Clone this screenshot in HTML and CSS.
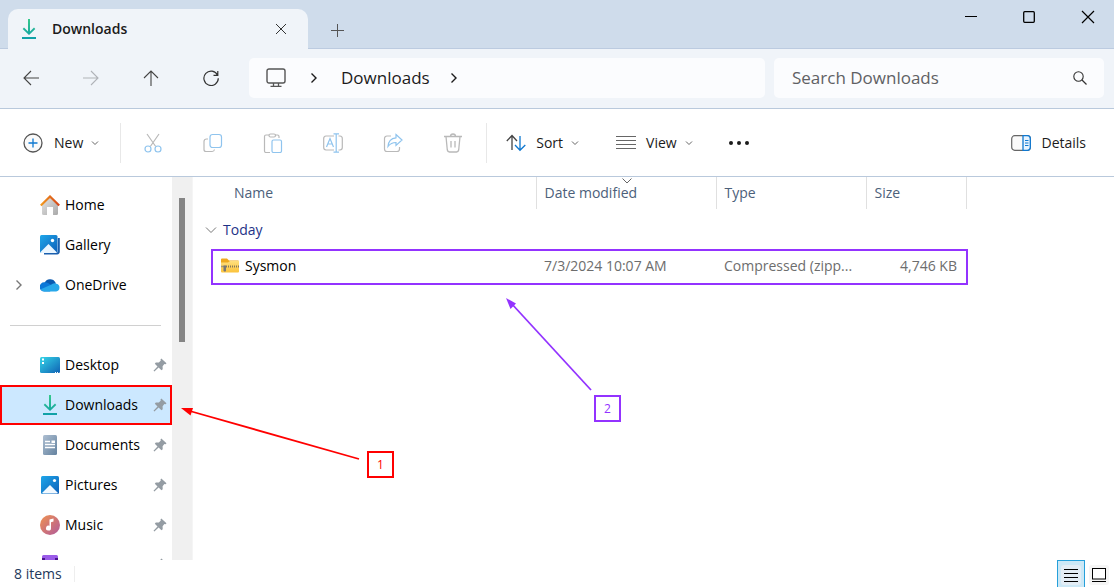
FILE: index.html
```
<!DOCTYPE html>
<html lang="en">
<head>
<meta charset="utf-8">
<title>Downloads</title>
<link rel="stylesheet" href="styles.css">
</head>
<body>
<svg class="defs" width="0" height="0" aria-hidden="true">
  <defs>
    <linearGradient id="g-down" x1="0" y1="0" x2="0" y2="1"><stop offset="0" stop-color="#35c98b"/><stop offset="1" stop-color="#0f9fa8"/></linearGradient>
    <linearGradient id="g-blue" x1="0" y1="0" x2="1" y2="1"><stop offset="0" stop-color="#1ea7ea"/><stop offset="1" stop-color="#0e5fb8"/></linearGradient>
    <linearGradient id="g-desk" x1="0" y1="0" x2="1" y2="1"><stop offset="0" stop-color="#35d6e8"/><stop offset="1" stop-color="#0f62b4"/></linearGradient>
    <linearGradient id="g-doc" x1="0" y1="0" x2="1" y2="1"><stop offset="0" stop-color="#aebfd2"/><stop offset="1" stop-color="#64829f"/></linearGradient>
    <linearGradient id="g-music" x1="0" y1="0" x2="1" y2="1"><stop offset="0" stop-color="#f0924f"/><stop offset="1" stop-color="#b05a9c"/></linearGradient>
    <linearGradient id="g-house" x1="0" y1="0" x2="1" y2="1"><stop offset="0" stop-color="#e6e6e6"/><stop offset="1" stop-color="#a9a9a9"/></linearGradient>
    <linearGradient id="g-roof" x1="0" y1="0" x2="1" y2="0"><stop offset="0" stop-color="#f39a1e"/><stop offset="1" stop-color="#d4451a"/></linearGradient>
    <linearGradient id="g-folder" x1="0" y1="0" x2="0" y2="1"><stop offset="0" stop-color="#ffdf7e"/><stop offset="1" stop-color="#fbc33c"/></linearGradient>
    <symbol id="i-down" viewBox="0 0 20 20"><path d="M9 0h2v12.600l4-4 1.300 1.400L10 16 3.700 10 5 8.600l4 4zM3 18h14v2H3z" fill="url(#g-down)"/></symbol>
    <symbol id="i-pin" viewBox="0 0 14 14"><path d="M8.300.5 13.500 5.200 12.600 6.200 11.400 6 9.600 8.200 9.700 11.200 8.500 12.200 5.600 9.500 1.400 13.500.5 12.800 4.500 8.400 1.800 5.700 2.800 4.500 5.900 4.500 7.800 2.500 7.500 1.400Z" fill="#949ca3"/></symbol>
    <symbol id="i-chev" viewBox="0 0 8 8"><path d="M1 2.500 4 5.500 7 2.500" fill="none" stroke="#666"/></symbol>
    <symbol id="i-next" viewBox="0 0 8 12"><path d="M1.500 1.500 6 6 1.500 10.500" fill="none" stroke="currentColor" stroke-width="1.400"/></symbol>
  </defs>
</svg>

<header class="titlebar">
  <div class="tab">
    <svg class="i20" aria-hidden="true"><use href="#i-down"/></svg>
    <span class="tab-title">Downloads</span>
    <button class="tab-close" aria-label="Close tab"><svg width="12" height="12"><path d="M1 1 11 11M11 1 1 11" stroke="#333" fill="none"/></svg></button>
  </div>
  <button class="tab-new" aria-label="New tab"><svg width="13" height="13"><path d="M6.500 0V13M0 6.500H13" stroke="#555" fill="none"/></svg></button>
  <div class="window-buttons">
    <button aria-label="Minimize"><svg width="12" height="12"><path d="M0 5.500H12" stroke="#000"/></svg></button>
    <button aria-label="Maximize"><svg width="12" height="12"><rect x=".7" y=".7" width="10.600" height="10.600" rx="1" fill="none" stroke="#000" stroke-width="1.300"/></svg></button>
    <button aria-label="Close"><svg width="14" height="14"><path d="M1 1 13 13M13 1 1 13" stroke="#000" stroke-width="1.200"/></svg></button>
  </div>
</header>

<nav class="navbar" aria-label="Navigation">
  <div class="nav-buttons">
    <button aria-label="Back"><svg width="16" height="16"><path d="M16 8H1M8 1 1 8 8 15" fill="none" stroke="#444" stroke-width="1.100"/></svg></button>
    <button aria-label="Forward" disabled><svg width="16" height="16"><path d="M0 8H15M8 1 15 8 8 15" fill="none" stroke="#b0b3b8" stroke-width="1.100"/></svg></button>
    <button aria-label="Up"><svg width="16" height="16"><path d="M8 16V1M1 8 8 1 15 8" fill="none" stroke="#444" stroke-width="1.100"/></svg></button>
    <button aria-label="Refresh"><svg width="16" height="16"><path d="M14.600 5.200A7.200 7.200 0 1 0 15.300 8.200M14.800 1V5.300H10.500" fill="none" stroke="#333" stroke-width="1.200"/></svg></button>
  </div>
  <div class="address">
    <svg class="pc" width="20" height="20" aria-hidden="true"><rect x="1" y="1" width="18" height="14" rx="2" fill="none" stroke="#555" stroke-width="1.400"/><path d="M7.500 15V18M12.500 15V18M4.500 18.400H15.500" stroke="#555" stroke-width="1.300"/></svg>
    <svg class="next" width="8" height="12" aria-hidden="true"><use href="#i-next"/></svg>
    <a class="crumb" href="#">Downloads</a>
    <svg class="next" width="8" height="12" aria-hidden="true"><use href="#i-next"/></svg>
  </div>
  <div class="search">
    <input type="search" placeholder="Search Downloads" aria-label="Search Downloads">
    <svg width="14" height="14" aria-hidden="true"><circle cx="5.500" cy="5.500" r="4.700" fill="none" stroke="#333" stroke-width="1.100"/><path d="M9 9 13.500 13.500" stroke="#333" stroke-width="1.200"/></svg>
  </div>
</nav>

<div class="toolbar" role="toolbar" aria-label="Commands">
  <button class="cmd cmd-new"><svg class="i20"><circle cx="10" cy="10" r="9" fill="#fafafa" stroke="#555" stroke-width="1.300"/><path d="M10 5.500V14.500M5.500 10H14.500" stroke="#0f78d0" stroke-width="1.300"/></svg>New<svg width="8" height="8"><use href="#i-chev"/></svg></button>
  <div class="icon-group">
    <button aria-label="Cut" disabled><svg class="i20" fill="none" stroke-width="1.200"><path d="M4 1 12.700 13.500M16 1 7.300 13.500" stroke="#b9b9b9"/><g stroke="#8fc4ee"><circle cx="5" cy="16" r="3"/><circle cx="15" cy="16" r="3"/></g></svg></button>
    <button aria-label="Copy" disabled><svg class="i20" fill="none" stroke-width="1.200"><path d="M5 6H3.500A2.500 2.500 0 0 0 1 8.500V16.500A2 2 0 0 0 3 18.500H9A2.500 2.500 0 0 0 11.500 16.500" stroke="#b9b9b9"/><rect x="7" y="1.500" width="11.500" height="13" rx="2.500" stroke="#8fc4ee"/></svg></button>
    <button aria-label="Paste" disabled><svg class="i20" fill="none" stroke-width="1.200"><path d="M6 2H3A1.500 1.500 0 0 0 1.500 3.500V18A1.500 1.500 0 0 0 3 19.500H7M12 2H14.500A1.500 1.500 0 0 1 16 3.500V5" stroke="#b9b9b9"/><rect x="6" y="1" width="6.500" height="3" rx="1.500" stroke="#b9b9b9"/><rect x="9" y="7" width="9.500" height="12.500" rx="1.500" stroke="#8fc4ee"/></svg></button>
    <button aria-label="Rename" disabled><svg class="i20" fill="none" stroke-width="1.200"><path d="M11 3H3A2.500 2.500 0 0 0 .7 5.500V14.500A2.500 2.500 0 0 0 3 17H11M15.500 3H17A2.500 2.500 0 0 1 19.300 5.500V14.500A2.500 2.500 0 0 1 17 17H15.500" stroke="#b9b9b9"/><path d="M3.500 14 7 5.500 10.500 14M4.800 11H9.200M13.200 1V19M10.500.8H16M10.500 19.200H16" stroke="#8fc4ee"/></svg></button>
    <button aria-label="Share" disabled><svg class="i20" fill="none" stroke-width="1.200"><path d="M8 3H4A2.500 2.500 0 0 0 1.500 5.500V16A2.500 2.500 0 0 0 4 18.500H14A2.500 2.500 0 0 0 16.500 16V14" stroke="#b9b9b9"/><path d="M13 1.500 19 7 13 12.500V9.500Q8 9.500 5 13.500 5.500 5.500 13 4.800Z" stroke="#8fc4ee"/></svg></button>
    <button aria-label="Delete" disabled><svg class="i20" fill="none" stroke="#b9b9b9" stroke-width="1.300"><path d="M1 3.500H19M7.500 3.500A2.500 2.500 0 0 1 12.500 3.500M3 3.500 4.300 17A2.500 2.500 0 0 0 6.500 19H13.500A2.500 2.500 0 0 0 15.700 17L17 3.500M8 8V14.500M12 8V14.500"/></svg></button>
  </div>
  <button class="cmd cmd-sort"><svg class="i20" fill="none" stroke-width="1.300"><path d="M6 17V2.500M.8 8 6 2.500 11 8" stroke="#444"/><path d="M14 3V17M9 12 14 17.300 19.300 12" stroke="#0f78d0"/></svg>Sort<svg width="8" height="8"><use href="#i-chev"/></svg></button>
  <button class="cmd cmd-view"><svg class="i20"><path d="M0 3.500H20M0 7.500H20M0 11.500H20M0 15.500H20" stroke="#666" stroke-width="1.100"/></svg>View<svg width="8" height="8"><use href="#i-chev"/></svg></button>
  <button class="more" aria-label="See more"><svg width="20" height="6" fill="#1b1b1b"><circle cx="2" cy="3" r="2"/><circle cx="10" cy="3" r="2"/><circle cx="18" cy="3" r="2"/></svg></button>
  <button class="cmd cmd-details"><svg class="i20"><rect x=".7" y="2.700" width="18.600" height="14.600" rx="3" fill="#fafafa" stroke="#666" stroke-width="1.200"/><path d="M12 2.700H16.300A3 3 0 0 1 19.300 5.700V14.300A3 3 0 0 1 16.300 17.300H12Z" fill="#e8f4ff" stroke="#0f78d0" stroke-width="1.300"/><path d="M14 7.500H17.500M14 10H17.500M14 12.500H17.500" stroke="#0f78d0"/></svg>Details</button>
</div>

<main class="main">
  <aside class="sidebar">
    <ul class="places">
      <li><a href="#"><svg class="i20"><path d="M2 9 10 2 18 9V18.500A1.500 1.500 0 0 1 16.500 20H13V12H7V20H3.500A1.500 1.500 0 0 1 2 18.500Z" fill="url(#g-house)"/><path d="M.8 10.500 10 1.500 19.200 10.500" fill="none" stroke="url(#g-roof)" stroke-width="2.200"/></svg>Home</a></li>
      <li><a href="#"><svg class="i20"><path d="M4 18.500H17A2 2 0 0 0 18.800 16.500V3" fill="none" stroke="#1a5fae" stroke-width="2"/><rect width="17.500" height="18" rx="1.500" fill="url(#g-blue)"/><path d="M0 17.500 8.500 9 17 17.500A2 2 0 0 1 16 18H1.500Z" fill="#eaf6ff"/><circle cx="12.500" cy="5.500" r="1.700" fill="#fff"/></svg>Gallery</a></li>
      <li><svg class="expander" width="8" height="12" aria-hidden="true"><use href="#i-next"/></svg><a href="#"><svg class="i20"><path d="M4.500 8A6 6 0 0 1 15.500 7.500L16 12H6Z" fill="#0a5ab0"/><path d="M4.200 16.500A4.400 4.400 0 0 1 4.200 7.300Q6.500 7 8.500 8.300L14 12 10 16.500Z" fill="#0b78d8"/><path d="M.8 14.300 11 9.800Q13.500 7.300 16.500 8.700A4 4 0 0 1 16.200 16.500H4.200Q1.800 16.300.8 14.300Z" fill="#28a8ea"/></svg>OneDrive</a></li>
      <li class="rule" role="separator"></li>
      <li><a href="#"><svg class="i20"><rect y="2" width="20" height="16" rx="1.500" fill="url(#g-desk)"/><path d="M2 4.500H4M2 8H4" stroke="#fff" stroke-width="2"/><path d="M15 17.500H19" stroke="#fff" stroke-dasharray="1 1"/></svg>Desktop</a><svg class="pin"><use href="#i-pin"/></svg></li>
      <li class="selected"><a href="#" aria-current="page"><svg class="i20"><use href="#i-down"/></svg>Downloads</a><svg class="pin"><use href="#i-pin"/></svg></li>
      <li><a href="#"><svg class="i20"><rect x="3" width="14" height="20" rx="1.500" fill="url(#g-doc)"/><path d="M5 6.500H10M5 9.500H15M5 12.500H15" stroke="#fff" stroke-width="1.300"/><path d="M11.500 5.500H15V8H11.500Z" fill="#fff"/></svg>Documents</a><svg class="pin"><use href="#i-pin"/></svg></li>
      <li><a href="#"><svg class="i20"><rect x="1" y="1" width="18" height="18" rx="1.500" fill="url(#g-blue)"/><path d="M2 18 10 10 18 18A2 2 0 0 1 17 18.500H3Z" fill="#f2f9ff"/><circle cx="14.500" cy="5.500" r="1.600" fill="#fff"/></svg>Pictures</a><svg class="pin"><use href="#i-pin"/></svg></li>
      <li><a href="#"><svg class="i20"><circle cx="10" cy="10" r="10" fill="url(#g-music)"/><path d="M9.500 4.500 13.500 3.500V6.500L11 7.200V13A2.500 2.500 0 1 1 9.500 10.800Z" fill="#fff"/></svg>Music</a><svg class="pin"><use href="#i-pin"/></svg></li>
      <li><a href="#" aria-label="Videos"><svg class="i20"><rect x="2" width="16" height="20" rx="1.500" fill="#9a5be8"/><path d="M2 3H5V5H2ZM15 3H18V5H15Z" fill="#4a168c"/></svg></a><svg class="pin"><use href="#i-pin"/></svg></li>
    </ul>
    <div class="scrollbar"><div class="thumb"></div></div>
  </aside>

  <section class="files">
    <table>
      <colgroup><col class="c-name"><col class="c-date"><col class="c-type"><col class="c-size"></colgroup>
      <thead>
        <tr><th>Name</th><th class="sorted">Date modified<svg class="sort-mark" width="10" height="6" aria-hidden="true"><path d="M.5.500 5 5 9.500.5" fill="none" stroke="#666"/></svg></th><th>Type</th><th>Size</th></tr>
      </thead>
      <tbody>
        <tr class="group"><td colspan="4"><button><svg width="12" height="8"><path d="M1 1.500 6 6.500 11 1.500" fill="none" stroke="#777"/></svg>Today</button></td></tr>
        <tr class="file">
          <td><span class="file-name"><svg class="zip" width="18" height="16" viewBox="0 0 18 16"><path d="M0 1.500A1 1 0 0 1 1 .5H6L8 2.500H17A1 1 0 0 1 18 3.500V8H0Z" fill="#efa91e"/><path d="M0 4.500H7L9 3H18V13.500A1 1 0 0 1 17 14.500H1A1 1 0 0 1 0 13.500Z" fill="url(#g-folder)"/><path d="M5 8.500H18" stroke="#85795b" stroke-width="2" stroke-dasharray="1 1"/><path d="M0 8.500H5" stroke="#a89a72" stroke-width="1.500"/><path d="M2.500 7.500H5V12.500L4 14 2.500 12.500Z" fill="#777"/></svg>Sysmon</span></td>
          <td>7/3/2024 10:07 AM</td><td>Compressed (zipp...</td><td class="num">4,746 KB</td>
        </tr>
      </tbody>
    </table>
  </section>

  <div class="notes">
    <svg class="arrows" width="640" height="320" aria-hidden="true">
      <g stroke="#f00" fill="#f00"><path d="M359 282 188 233.500" stroke-width="1.800"/><path d="M181 231 193 231 190.500 238.500Z" stroke="none"/></g>
      <g stroke="#9333ff" fill="#9333ff"><path d="M591 213 511 126" stroke-width="1.800"/><path d="M506 121 516 126.500 510.500 132Z" stroke="none"/></g>
    </svg>
    <span class="note note-one">1</span>
    <span class="note note-two">2</span>
  </div>
</main>

<footer class="statusbar">
  <span class="count">8 items</span>
  <div class="view-modes">
    <button class="active" aria-label="Details view" aria-pressed="true"><svg width="20" height="20"><rect width="20" height="20" rx="3" fill="#e3edf5"/><path d="M3 4.500H17M3 8.500H17M3 12.500H17M3 16.500H17" stroke="#000"/></svg></button>
    <button aria-label="Thumbnail view" aria-pressed="false"><svg width="20" height="20"><rect width="20" height="20" rx="3" fill="#f5f5f5"/><rect x="3.500" y="3.500" width="13" height="10.500" fill="#fff" stroke="#000"/><path d="M3 16.500H17" stroke="#000"/></svg></button>
  </div>
</footer>
</body>
</html>
```
FILE: styles.css
```
* { box-sizing: border-box; }
body {
  margin: 0;
  height: 100vh;
  display: flex;
  flex-direction: column;
  overflow: hidden;
  background: #fff;
  color: #1b1b1b;
  font: 14px/20px "Open Sans", "Noto Sans", sans-serif;
}
button {
  display: flex;
  align-items: center;
  justify-content: center;
  padding: 0;
  border: 0;
  background: none;
  color: inherit;
  font: inherit;
}
a { color: inherit; text-decoration: none; }
svg { display: block; flex: none; }
.defs { position: absolute; }
.i20 { width: 20px; height: 20px; }

.titlebar {
  flex: none;
  display: flex;
  align-items: flex-end;
  height: 49px;
  padding-left: 8px;
  background: #cfdceb;
  box-shadow: inset 0 -1px #bccbe0;
}
.tab {
  display: flex;
  align-items: center;
  width: 300px;
  height: 40px;
  padding: 0 20px 0 11px;
  gap: 13px;
  border-radius: 10px 10px 0 0;
  background: #f0f4f9;
}
.tab-title { flex: 1; font-weight: 600; }
.tab-close { width: 14px; height: 20px; }
.tab-new { width: 40px; height: 38px; margin-left: 9px; }
.window-buttons { display: flex; align-self: flex-start; margin-left: auto; }
.window-buttons button { width: 58px; height: 34px; }
.window-buttons button:last-child { width: 52px; margin-left: 4px; }

.navbar {
  flex: none;
  display: flex;
  align-items: center;
  height: 60px;
  padding: 0 10px 2px 0;
  border-bottom: 1px solid #b9c9dc;
  background: #f0f4f9;
}
.nav-buttons { display: flex; margin: 0 8px 0 1px; }
.nav-buttons button { width: 60px; height: 40px; }
.address, .search {
  display: flex;
  align-items: center;
  height: 40px;
  border-radius: 5px;
  background: #fbfcfe;
  font-size: 17px;
}
.address { flex: 499 1 0; margin-right: 9px; padding-left: 17px; }
.search { flex: 295 1 0; padding: 0 17px 0 18px; }
.pc { margin-right: 24px; }
.crumb { margin: 0 20px 0 23px; }
.search input {
  flex: 1;
  min-width: 0;
  padding: 0;
  border: 0;
  outline: 0;
  background: none;
  font: inherit;
}
.search input::placeholder { color: #5f6164; opacity: 1; }

.toolbar {
  flex: none;
  display: flex;
  align-items: center;
  height: 68px;
  padding: 0 28px 0 23px;
  border-bottom: 1px solid #b9c9dc;
}
.cmd { gap: 8px; height: 40px; white-space: nowrap; }
.cmd-new .i20 { margin-right: 3px; }
.icon-group {
  display: flex;
  height: 40px;
  margin-left: 21px;
  padding: 0 3px 0 2px;
  border: solid #e8e8e8;
  border-width: 0 1px;
}
.icon-group button { width: 60px; }
.cmd-sort { margin-left: 19px; }
.cmd-sort .i20, .cmd-view .i20, .cmd-details .i20 { margin-right: 2px; }
.cmd-view { margin-left: 37px; }
.more { width: 40px; height: 40px; margin-left: 26px; }
.cmd-details { margin-left: auto; }

.main { position: relative; flex: 1; min-height: 0; display: flex; }
.sidebar { flex: none; display: flex; width: 193px; border-right: 1px solid #f5f5f5; overflow: hidden; color: #000; }
.places { flex: 1; margin: 0; padding: 8px 0 0; list-style: none; }
.places li { display: flex; align-items: center; height: 40px; padding: 0 5px 0 15px; }
.places li a { display: flex; flex: 1; align-items: center; gap: 5px; padding-left: 25px; }
.expander { color: #777; }
.places li .expander + a { padding-left: 17px; }
.places .rule { padding: 0 11px 0 10px; }
.rule::before { content: ""; flex: 1; height: 1px; background: #d0d0d0; }
.places .selected { background: #cce8ff; outline: 2px solid #f00; outline-offset: -2px; }
.pin { width: 14px; height: 14px; }
.scrollbar { width: 20px; padding: 21px 7px; background: #f0f0f0; }
.thumb { height: 144px; background: #858585; }

.files { flex: 1; min-width: 0; padding-left: 20px; overflow: hidden; }
table { width: 753px; border-collapse: collapse; table-layout: fixed; }
.c-name { width: 323px; }
.c-date { width: 180px; }
.c-type { width: 150px; }
.c-size { width: 100px; }
th {
  position: relative;
  height: 32px;
  padding: 0 0 0 8px;
  border-right: 1px solid #e0e0e0;
  color: #4c607a;
  font-weight: 400;
  text-align: left;
}
th:first-child { padding-left: 21px; }
.sort-mark { position: absolute; left: 85px; top: 1px; }
td { padding: 0 0 0 8px; color: #6d6d6d; white-space: nowrap; }
.group td { height: 42px; padding: 0; }
.group button { gap: 6px; margin-left: -8px; color: #1e3287; }
.file { outline: 2px solid #9333ff; }
.file td { height: 32px; padding-bottom: 2px; }
.file .num { padding-right: 9px; text-align: right; }
.file-name { display: flex; align-items: center; gap: 6px; color: #000; }

.notes { position: absolute; top: 0; left: 0; pointer-events: none; }
.note {
  position: absolute;
  width: 27px;
  height: 27px;
  border: 2px solid;
  font-size: 12px;
  line-height: 23px;
  text-align: center;
}
.note-one { left: 367px; top: 274px; color: #f00; }
.note-two { left: 594px; top: 218px; color: #9333ff; }

.statusbar {
  flex: none;
  display: flex;
  align-items: center;
  justify-content: space-between;
  height: 27px;
  padding: 0 1px 0 14px;
  color: #1e395b;
}
.count { padding-right: 12px; border-right: 1px solid #eee; line-height: 16px; }
.view-modes { display: flex; align-self: stretch; }
.view-modes button { width: 28px; padding-top: 2px; }
.view-modes .active { border: 1px solid #26a0da; border-bottom: 0; background: #cce8f6; }
```
